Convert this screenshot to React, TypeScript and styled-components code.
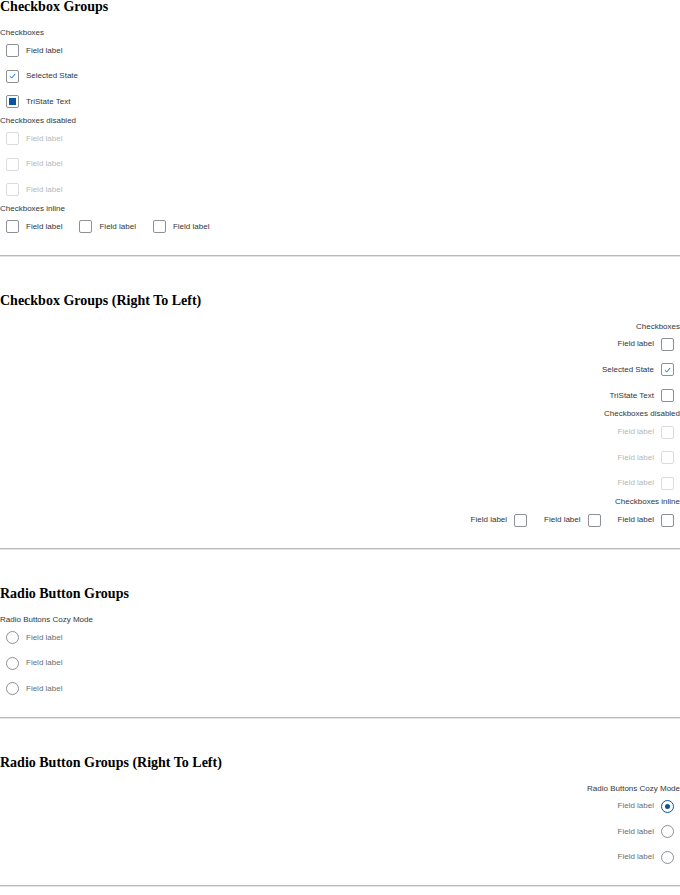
import styled, { createGlobalStyle, css } from "styled-components";

const GlobalStyle = createGlobalStyle`
  html, body {
    margin: 0;
    padding: 0;
    background: #fff;
  }
`;

type Item = {
  label: string,
  state?: "checked" | "tristate",
  disabled?: boolean
};

type Group = {
  title: string,
  items: Item[],
  inline?: boolean
};

const checkboxGroups: Group[] = [
  {
    title: "Checkboxes",
    items: [
      { label: "Field label" },
      { label: "Selected State", state: "checked" },
      { label: "TriState Text", state: "tristate" },
    ],
  },
  {
    title: "Checkboxes disabled",
    items: [
      { label: "Field label", disabled: true },
      { label: "Field label", disabled: true },
      { label: "Field label", disabled: true },
    ],
  },
  {
    title: "Checkboxes inline",
    inline: true,
    items: [{ label: "Field label" }, { label: "Field label" }, { label: "Field label" }],
  },
];

// the RTL copy shows the tristate box empty
const rtlGroups: Group[] = checkboxGroups.map((g) => ({
  ...g,
  items: g.items.map((i) => (i.state === "tristate" ? { ...i, state: undefined } : i)),
}));

const CheckMark = () => (
  <svg width="7" height="6" viewBox="0 0 7 6">
    <path d="M0.8 3.2 L2.7 5 L6.2 0.9" fill="none" stroke="#0a6ed1" strokeWidth="1" />
  </svg>
);

const CheckboxGroupList = ({ groups, rtl }: { groups: Group[], rtl?: boolean }) => (
  <Groups dir={rtl ? "rtl" : "ltr"}>
    {groups.map((group) => (
      <Fieldset key={group.title}>
        <Legend>{group.title}</Legend>
        <Items inline={group.inline}>
          {group.items.map((item, idx) => (
            <CheckRow key={idx} inline={group.inline}>
              <Box disabled={item.disabled}>
                {item.state === "checked" && <CheckMark />}
                {item.state === "tristate" && <TriFill />}
              </Box>
              <Label disabled={item.disabled}>{item.label}</Label>
            </CheckRow>
          ))}
        </Items>
      </Fieldset>
    ))}
  </Groups>
);

const RadioGroup = ({ rtl, selected }: { rtl?: boolean, selected?: number }) => (
  <Groups dir={rtl ? "rtl" : "ltr"}>
    <Fieldset>
      <Legend>Radio Buttons Cozy Mode</Legend>
      <Items>
        {[0, 1, 2].map((i) => (
          <RadioRow key={i}>
            <Radio selected={selected === i}>{selected === i && <Dot />}</Radio>
            <RadioLabel>Field label</RadioLabel>
          </RadioRow>
        ))}
      </Items>
    </Fieldset>
  </Groups>
);

const App = () => {
  return (
    <Page>
      <GlobalStyle />
      <Section first>
        <Heading>Checkbox Groups</Heading>
        <CheckboxGroupList groups={checkboxGroups} />
      </Section>
      <Divider />
      <Section>
        <Heading>Checkbox Groups (Right To Left)</Heading>
        <CheckboxGroupList groups={rtlGroups} rtl />
      </Section>
      <Divider />
      <Section>
        <Heading>Radio Button Groups</Heading>
        <RadioGroup />
      </Section>
      <Divider />
      <Section>
        <Heading>Radio Button Groups (Right To Left)</Heading>
        <RadioGroup rtl selected={0} />
      </Section>
      <Divider />
    </Page>
  );
};

export default App;

const Page = styled.div`
  width: 680px;
  font-family: "Liberation Sans", Arial, sans-serif;
  color: #32363a;
`;

const Section = styled.section<{ first?: boolean }>`
  display: flex;
  flex-direction: column;
  padding-top: ${({ first }) => (first ? "0" : "36px")};
  margin-top: ${({ first }) => (first ? "-1px" : "0")};
  padding-bottom: 15px;
`;

const Heading = styled.h2`
  margin: 0 0 13px;
  font-family: "Liberation Serif", "Times New Roman", serif;
  font-size: 14px;
  line-height: 16px;
  font-weight: bold;
  color: #000;
`;

const Divider = styled.hr`
  margin: 0;
  height: 0;
  border: none;
  border-top: 1px solid #b9b9b9;
  border-bottom: 1px solid #e4e4e4;
`;

const Groups = styled.div`
  display: flex;
  flex-direction: column;
  gap: 1px;
`;

const Fieldset = styled.div`
  display: flex;
  flex-direction: column;
`;

const Legend = styled.div`
  font-size: 8px;
  line-height: 10px;
  height: 10px;
  color: #32363a;
`;

const Items = styled.div<{ inline?: boolean }>`
  display: flex;
  flex-direction: ${({ inline }) => (inline ? "row" : "column")};
  gap: ${({ inline }) => (inline ? "11px" : "0")};
`;

const CheckRow = styled.div<{ inline?: boolean }>`
  display: flex;
  align-items: center;
  gap: 7px;
  height: ${({ inline }) => (inline ? "26px" : "25.6px")};
  padding-inline-start: 6px;
`;

const Box = styled.span<{ disabled?: boolean }>`
  box-sizing: border-box;
  width: 13px;
  height: 13px;
  border: 1px solid #8c9196;
  border-radius: 2px;
  background: #fff;
  display: flex;
  align-items: center;
  justify-content: center;

  ${({ disabled }) => disabled && css`
    border-color: #dcdcdc;
  `}
`;

const TriFill = styled.span`
  width: 7px;
  height: 7px;
  background: #0854a0;
`;

const Label = styled.span<{ disabled?: boolean }>`
  font-size: 8px;
  line-height: 10px;
  color: ${({ disabled }) => (disabled ? "#b8b8b8" : "#32363a")};
`;

const RadioRow = styled.div`
  display: flex;
  align-items: center;
  gap: 7px;
  height: 25.5px;
  padding-inline-start: 6px;
`;

const Radio = styled.span<{ selected?: boolean }>`
  box-sizing: border-box;
  width: 13px;
  height: 13px;
  border-radius: 50%;
  border: 1px solid ${({ selected }) => (selected ? "#0854a0" : "#8c9196")};
  display: flex;
  align-items: center;
  justify-content: center;
`;

const Dot = styled.span`
  width: 5px;
  height: 5px;
  border-radius: 50%;
  background: #0854a0;
`;

const RadioLabel = styled.span`
  font-size: 8px;
  line-height: 10px;
  color: #6a6d70;
`;
